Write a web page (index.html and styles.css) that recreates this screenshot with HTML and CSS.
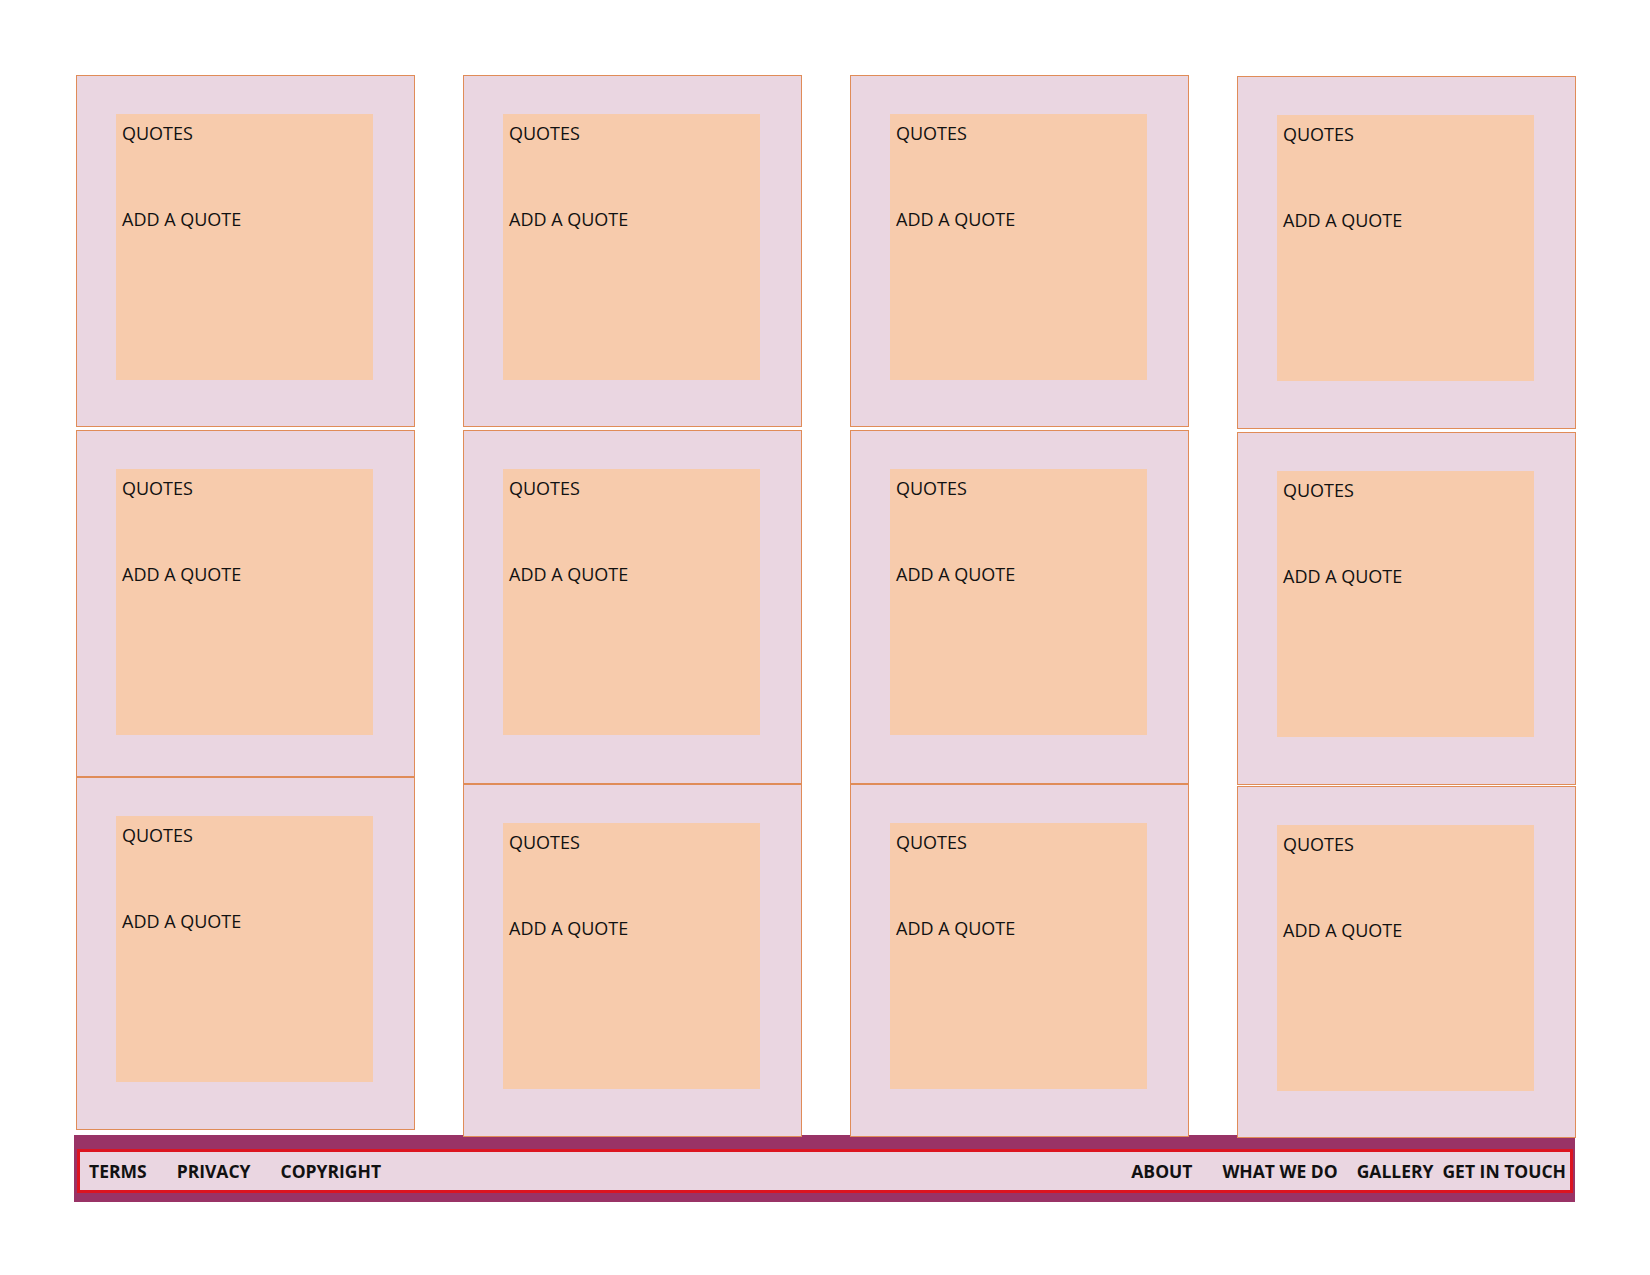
FILE: index.html
```html
<!DOCTYPE html>
<html lang="en">
<head>
    <meta charset="UTF-8">
    <meta name="viewport" content="width=device-width, initial-scale=1.0">
    <title>Quotes</title>
    <link rel="stylesheet" href="styles.css">
</head>
<body>
    <div class="board">
        <div class="column">
            <div class="card"><div class="note"><p>QUOTES</p><p class="add">ADD A QUOTE</p></div></div>
            <div class="card card-short"><div class="note"><p>QUOTES</p><p class="add">ADD A QUOTE</p></div></div>
            <div class="card card-flush"><div class="note"><p>QUOTES</p><p class="add">ADD A QUOTE</p></div></div>
        </div>
        <div class="column">
            <div class="card"><div class="note"><p>QUOTES</p><p class="add">ADD A QUOTE</p></div></div>
            <div class="card card-tall"><div class="note"><p>QUOTES</p><p class="add">ADD A QUOTE</p></div></div>
            <div class="card card-flush"><div class="note"><p>QUOTES</p><p class="add">ADD A QUOTE</p></div></div>
        </div>
        <div class="column">
            <div class="card"><div class="note"><p>QUOTES</p><p class="add">ADD A QUOTE</p></div></div>
            <div class="card card-tall"><div class="note"><p>QUOTES</p><p class="add">ADD A QUOTE</p></div></div>
            <div class="card card-flush"><div class="note"><p>QUOTES</p><p class="add">ADD A QUOTE</p></div></div>
        </div>
        <div class="column column-low">
            <div class="card card-tall"><div class="note"><p>QUOTES</p><p class="add">ADD A QUOTE</p></div></div>
            <div class="card card-tall"><div class="note"><p>QUOTES</p><p class="add">ADD A QUOTE</p></div></div>
            <div class="card card-last"><div class="note"><p>QUOTES</p><p class="add">ADD A QUOTE</p></div></div>
        </div>
    </div>

    <footer class="footer">
        <nav class="footer-nav">
            <div class="links links-left">
                <a href="#">TERMS</a>
                <a href="#">PRIVACY</a>
                <a href="#">COPYRIGHT</a>
            </div>
            <div class="links links-right">
                <a href="#" class="about">ABOUT</a>
                <a href="#" class="what">WHAT WE DO</a>
                <a href="#" class="gallery">GALLERY</a>
                <a href="#">GET IN TOUCH</a>
            </div>
        </nav>
    </footer>
</body>
</html>
```

FILE: styles.css
```css
body {
    margin: 0;
    padding: 0;
    background-color: #fff;
    font-family: "Open Sans", "Liberation Sans", sans-serif;
    color: #1a1a1a;
}

.board {
    position: relative;
    z-index: 1;
    display: grid;
    grid-template-columns: repeat(4, 339px);
    column-gap: 48px;
    align-items: start;
    padding: 75px 0 0 76px;
}

.column {
    display: flex;
    flex-direction: column;
}

.column-low {
    margin-top: 1px;
}

.card {
    box-sizing: border-box;
    height: 352px;
    padding: 38px 0 0 39px;
    background-color: #ead6e1;
    border: 1px solid #e08c58;
    margin-bottom: 3px;
}

.card-short {
    height: 347px;
    margin-bottom: 0;
}

.card-tall {
    height: 354px;
    margin-bottom: 0;
}

.column-low .card-tall {
    height: 353px;
    margin-bottom: 3px;
}

.column-low .card-tall + .card-tall {
    margin-bottom: 1px;
}

.card-flush {
    height: 353px;
    margin-bottom: 0;
}

.card-last {
    height: 352px;
    margin-bottom: 0;
}

.note {
    box-sizing: border-box;
    width: 257px;
    height: 266px;
    padding: 7px 6px;
    background-color: #f7cbac;
}

.note p {
    margin: 0;
    font-size: 18px;
    line-height: 24px;
    color: #111;
}

.note .add {
    margin-top: 62px;
}

.footer {
    width: 1501px;
    box-sizing: border-box;
    margin: -3px 0 0 74px;
    padding: 14px 2px 9px 3px;
    background-color: #993366;
}

.footer-nav {
    display: flex;
    justify-content: space-between;
    align-items: center;
    height: 38px;
    padding: 0 4px 0 9px;
    background-color: #ead6e1;
    border: 3px solid #dc1420;
}

.links {
    display: flex;
    align-items: center;
}

.links a {
    font-size: 17.5px;
    font-weight: bold;
    color: #111;
    text-decoration: none;
}

.links-left {
    gap: 30px;
}

.about {
    margin-right: 30px;
}

.what {
    margin-right: 19px;
}

.gallery {
    margin-right: 9px;
}
```
